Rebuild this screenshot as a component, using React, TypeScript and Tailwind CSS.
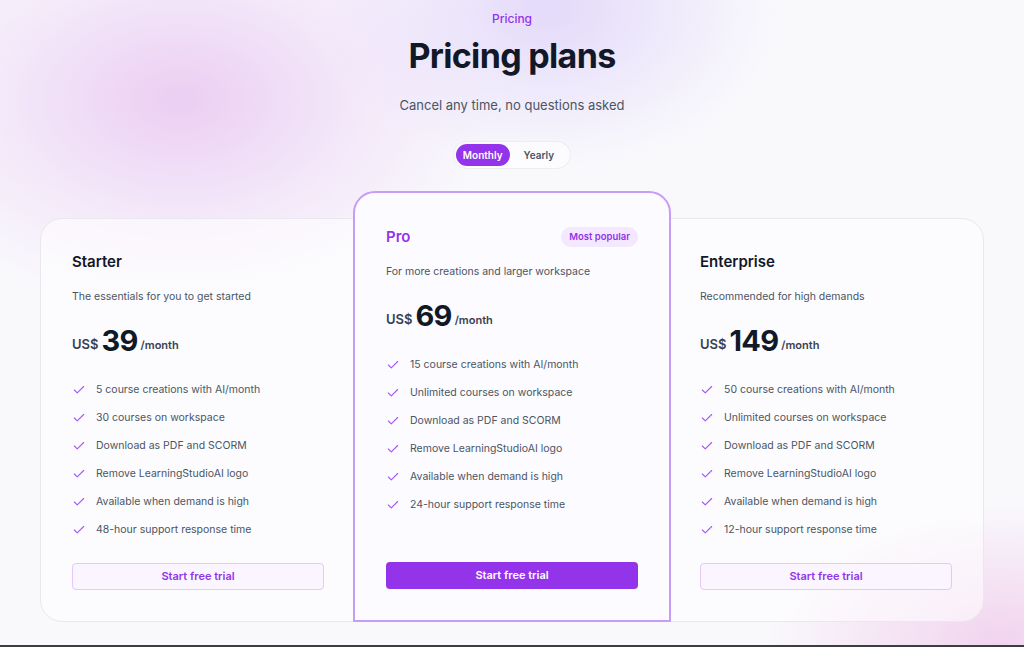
import React, { useState } from 'react';
import { Check } from 'lucide-react';

interface Plan {
  name: string;
  description: string;
  price: number;
  features: string[];
  popular?: boolean;
}

const plans: Plan[] = [
  {
    name: 'Starter',
    description: 'The essentials for you to get started',
    price: 39,
    features: [
      '5 course creations with AI/month',
      '30 courses on workspace',
      'Download as PDF and SCORM',
      'Remove LearningStudioAI logo',
      'Available when demand is high',
      '48-hour support response time',
    ],
  },
  {
    name: 'Pro',
    description: 'For more creations and larger workspace',
    price: 69,
    popular: true,
    features: [
      '15 course creations with AI/month',
      'Unlimited courses on workspace',
      'Download as PDF and SCORM',
      'Remove LearningStudioAI logo',
      'Available when demand is high',
      '24-hour support response time',
    ],
  },
  {
    name: 'Enterprise',
    description: 'Recommended for high demands',
    price: 149,
    features: [
      '50 course creations with AI/month',
      'Unlimited courses on workspace',
      'Download as PDF and SCORM',
      'Remove LearningStudioAI logo',
      'Available when demand is high',
      '12-hour support response time',
    ],
  },
];

const PlanCard: React.FC<{ plan: Plan }> = ({ plan }) => {
  const popular = plan.popular;
  return (
    <div
      className={
        popular
          ? 'relative z-10 -mx-[2px] -mt-[28px] -mb-px flex flex-col rounded-t-[22px] border-2 border-[#c69cf7] bg-[#fcfbff] px-[31px] pt-[34px] pb-[31px]'
          : 'flex flex-col px-[31px] pt-[33px] pb-[31px]'
      }
    >
      <div className="flex h-5 items-center justify-between">
        <h3 className={`text-[15px] font-semibold ${popular ? 'text-[#9333ea]' : 'text-[#111827]'}`}>{plan.name}</h3>
        {popular && (
          <span className="rounded-full bg-[#f3e8ff] px-[8px] py-[3px] text-[9.5px] font-semibold text-[#9333ea]">
            Most popular
          </span>
        )}
      </div>
      <p className="mt-[17px] text-[10.5px] leading-4 text-[#4b5563]">{plan.description}</p>
      <div className="mt-[18px] flex h-9 items-center gap-[3px]">
        <span className="mt-2 text-[13px] font-semibold text-[#374151]">US$</span>
        <span className="text-[29px] font-bold tracking-tight text-[#111827]">{plan.price}</span>
        <span className="mt-2 text-[11px] font-semibold text-[#374151]">/month</span>
      </div>
      <ul className="mt-[23px] flex flex-col gap-3">
        {plan.features.map((f) => (
          <li key={f} className="flex h-4 items-center gap-[10px] text-[10.5px] text-[#4b5563]">
            <Check size={14} strokeWidth={1.9} className="text-[#a855f7]" />
            {f}
          </li>
        ))}
      </ul>
      <button
        className={
          popular
            ? 'mt-auto h-[27px] w-full rounded-[4px] bg-[#9333ea] text-[11px] font-semibold text-white'
            : 'mt-[25px] h-[27px] w-full rounded-[4px] border border-[#e3c8fd] bg-[#faf5ff] text-[11px] font-semibold text-[#9333ea]'
        }
      >
        Start free trial
      </button>
    </div>
  );
};

const App: React.FC = () => {
  const [billing, setBilling] = useState<'monthly' | 'yearly'>('monthly');

  return (
    <div className="relative flex h-[647px] w-full flex-col overflow-hidden bg-[#f9f9fc] font-['Inter',sans-serif]">
      {/* soft background blobs */}
      <div className="pointer-events-none absolute -left-[140px] -top-[110px] h-[420px] w-[640px] rounded-full bg-[radial-gradient(closest-side,rgba(232,195,240,0.8),rgba(236,212,246,0.4)_60%,rgba(249,249,252,0))]" />
      <div className="pointer-events-none absolute left-[320px] -top-[150px] h-[320px] w-[460px] rounded-full bg-[radial-gradient(closest-side,rgba(224,212,250,0.85),rgba(249,249,252,0))]" />
      <div className="pointer-events-none absolute left-[760px] top-[500px] h-[280px] w-[480px] rounded-full bg-[radial-gradient(closest-side,rgba(240,205,236,0.85),rgba(249,249,252,0))]" />

      <div className="relative flex flex-1 flex-col items-center pt-[11px]">
        <p className="text-xs font-medium leading-4 text-[#9333ea]">Pricing</p>
        <h1 className="mt-[9px] text-[34px] font-bold leading-[40px] tracking-[-0.02em] text-[#111827]">Pricing plans</h1>
        <p className="mt-[19px] text-[13px] leading-5 text-[#4b5563]">Cancel any time, no questions asked</p>

        <div className="mt-[26px] flex items-center rounded-full border border-[#ececf2] bg-white/60 p-[2px]">
          <button
            onClick={() => setBilling('monthly')}
            className={`h-[22px] rounded-full px-[7px] text-[10px] font-semibold ${billing === 'monthly' ? 'bg-[#9333ea] text-white' : 'text-[#4b5563]'}`}
          >
            Monthly
          </button>
          <button
            onClick={() => setBilling('yearly')}
            className={`h-[22px] rounded-full px-[14px] text-[10px] font-semibold ${billing === 'yearly' ? 'bg-[#9333ea] text-white' : 'text-[#4b5563]'}`}
          >
            Yearly
          </button>
        </div>

        <div className="mt-[49px] grid w-[944px] grid-cols-3 rounded-[22px] border border-[#e8e8ee] bg-white/55">
          {plans.map((p) => (
            <PlanCard key={p.name} plan={p} />
          ))}
        </div>
      </div>
      <div className="relative h-[2px] w-full bg-[#3c3c42]" />
    </div>
  );
};

export default App;
